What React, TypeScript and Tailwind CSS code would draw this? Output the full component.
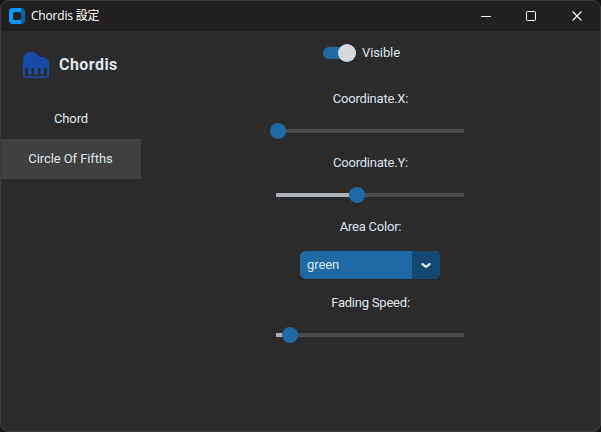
import React from "react";

function Slider({ value }: { value: number }) {
  return (
    <div className="relative mx-auto h-4 w-[192px]">
      <div className="absolute inset-x-[2px] top-[6px] h-1 overflow-hidden rounded-[1px] bg-[#4a4d50]">
        <div className="h-full bg-[#aab0b5]" style={{ width: value }} />
      </div>
      <div
        className="absolute top-0 size-4 rounded-full bg-[#1f6aa5]"
        style={{ left: value - 6 }}
      />
    </div>
  );
}

function Label({ children }: { children: React.ReactNode }) {
  return (
    <div className="h-4 pl-px text-center text-[13px] leading-4 tracking-[-0.22px]">
      {children}
    </div>
  );
}

function TitleBar() {
  return (
    <header className="flex h-[30px] shrink-0 items-center bg-[#202020] text-white">
      <svg className="ml-2 size-4" viewBox="0 0 16 16">
        <path d="M4 0H12V16H4Q0 16 0 12V4Q0 0 4 0Z" fill="#0a98fa" />
        <path d="M12 0Q16 0 16 4V12Q16 16 12 16Z" fill="#0861ad" />
        <rect x="4" y="4" width="8" height="8" rx="1.5" fill="#202020" />
      </svg>
      <h1 className="ml-[6px] font-['Open_Sans','Noto_Sans_CJK_JP',sans-serif] text-[12px] leading-4 tracking-[-0.2px]">
        Chordis 設定
      </h1>
      <svg className="ml-auto mr-[17px] h-[12px] w-[102px]" viewBox="0 0 102 12" fill="none" stroke="#fff">
        <path d="M0 6.5H10" />
        <rect x="45.5" y="1.5" width="9" height="9" rx="1" />
        <path d="M91.5 1.5L100.5 10.5M100.5 1.5L91.5 10.5" strokeWidth="1.1" />
      </svg>
    </header>
  );
}

function Sidebar() {
  return (
    <nav className="w-[140px] text-center text-[13px]">
      <div className="flex h-[68px] items-center pl-[22px]">
        <svg className="size-[26px]" viewBox="0 0 26 26">
          <path
            d="M0 8C0 3.2 3.3 0 8 0C14.5 0 14 5 19 5C23.5 5 26 7.5 26 11V23Q26 26 23 26H3Q0 26 0 23Z"
            fill="#174ba5"
          />
          <path
            d="M2 16H5V22H6.5V24.5H3Q2 24.5 2 23.5ZM7.5 22H8.5V16H11V22H12.5V24.5H7.5ZM13.5 22H15V16H17.5V22H18.5V24.5H13.5ZM19.5 22H21V16H24V23.5Q24 24.5 23 24.5H19.5Z"
            fill="#2b2b2b"
          />
        </svg>
        <span className="ml-[10px] text-[16px] font-bold tracking-[0.45px]">Chordis</span>
      </div>
      <div className="flex h-10 items-center justify-center tracking-[-0.1px]">Chord</div>
      <div className="flex h-10 items-center justify-center bg-[#404040] pr-px tracking-[-0.08px]">
        Circle Of Fifths
      </div>
    </nav>
  );
}

export default function App() {
  return (
    <div className="h-[432px] w-[601px] overflow-hidden bg-[#151515]">
      <div className="flex h-full flex-col overflow-hidden rounded-[8px] border border-[#3b3b3b] bg-[#2b2b2b] font-[Roboto,sans-serif] text-[#dce4ee]">
        <TitleBar />
        <div className="flex min-h-0 flex-1">
          <Sidebar />
          <main className="w-[458px] pt-[13px]">
            <div className="ml-[182px] flex h-[18px] items-center">
              <div className="relative h-3 w-[33px] rounded-full bg-[#1f6aa5]">
                <div className="absolute -top-[3px] right-0 size-[18px] rounded-full bg-[#d5d9de]" />
              </div>
              <span className="ml-[6px] text-[13px] leading-4 tracking-[-0.1px]">Visible</span>
            </div>
            <div className="mt-[29px]"><Label>Coordinate.X:</Label></div>
            <div className="mt-4"><Slider value={2} /></div>
            <div className="mt-4"><Label>Coordinate.Y:</Label></div>
            <div className="mt-4"><Slider value={81} /></div>
            <div className="mt-4"><Label>Area Color:</Label></div>
            <div className="mx-auto mt-4 flex h-7 w-[140px] overflow-hidden rounded-[6px] bg-[#1f6aa5]">
              <span className="w-28 pl-[7px] text-[13px] leading-7 tracking-[-0.1px]">green</span>
              <span className="flex flex-1 items-center justify-center bg-[#144870] pt-px">
                <svg className="h-[6px] w-[10px]" viewBox="0 0 10 6" fill="none" stroke="#dce4ee" strokeWidth="2.4" strokeLinecap="round" strokeLinejoin="round">
                  <path d="M1.5 1.3L5 3.8L8.5 1.3" />
                </svg>
              </span>
            </div>
            <div className="mt-4"><Label>Fading Speed:</Label></div>
            <div className="mt-4"><Slider value={14} /></div>
          </main>
        </div>
      </div>
    </div>
  );
}
